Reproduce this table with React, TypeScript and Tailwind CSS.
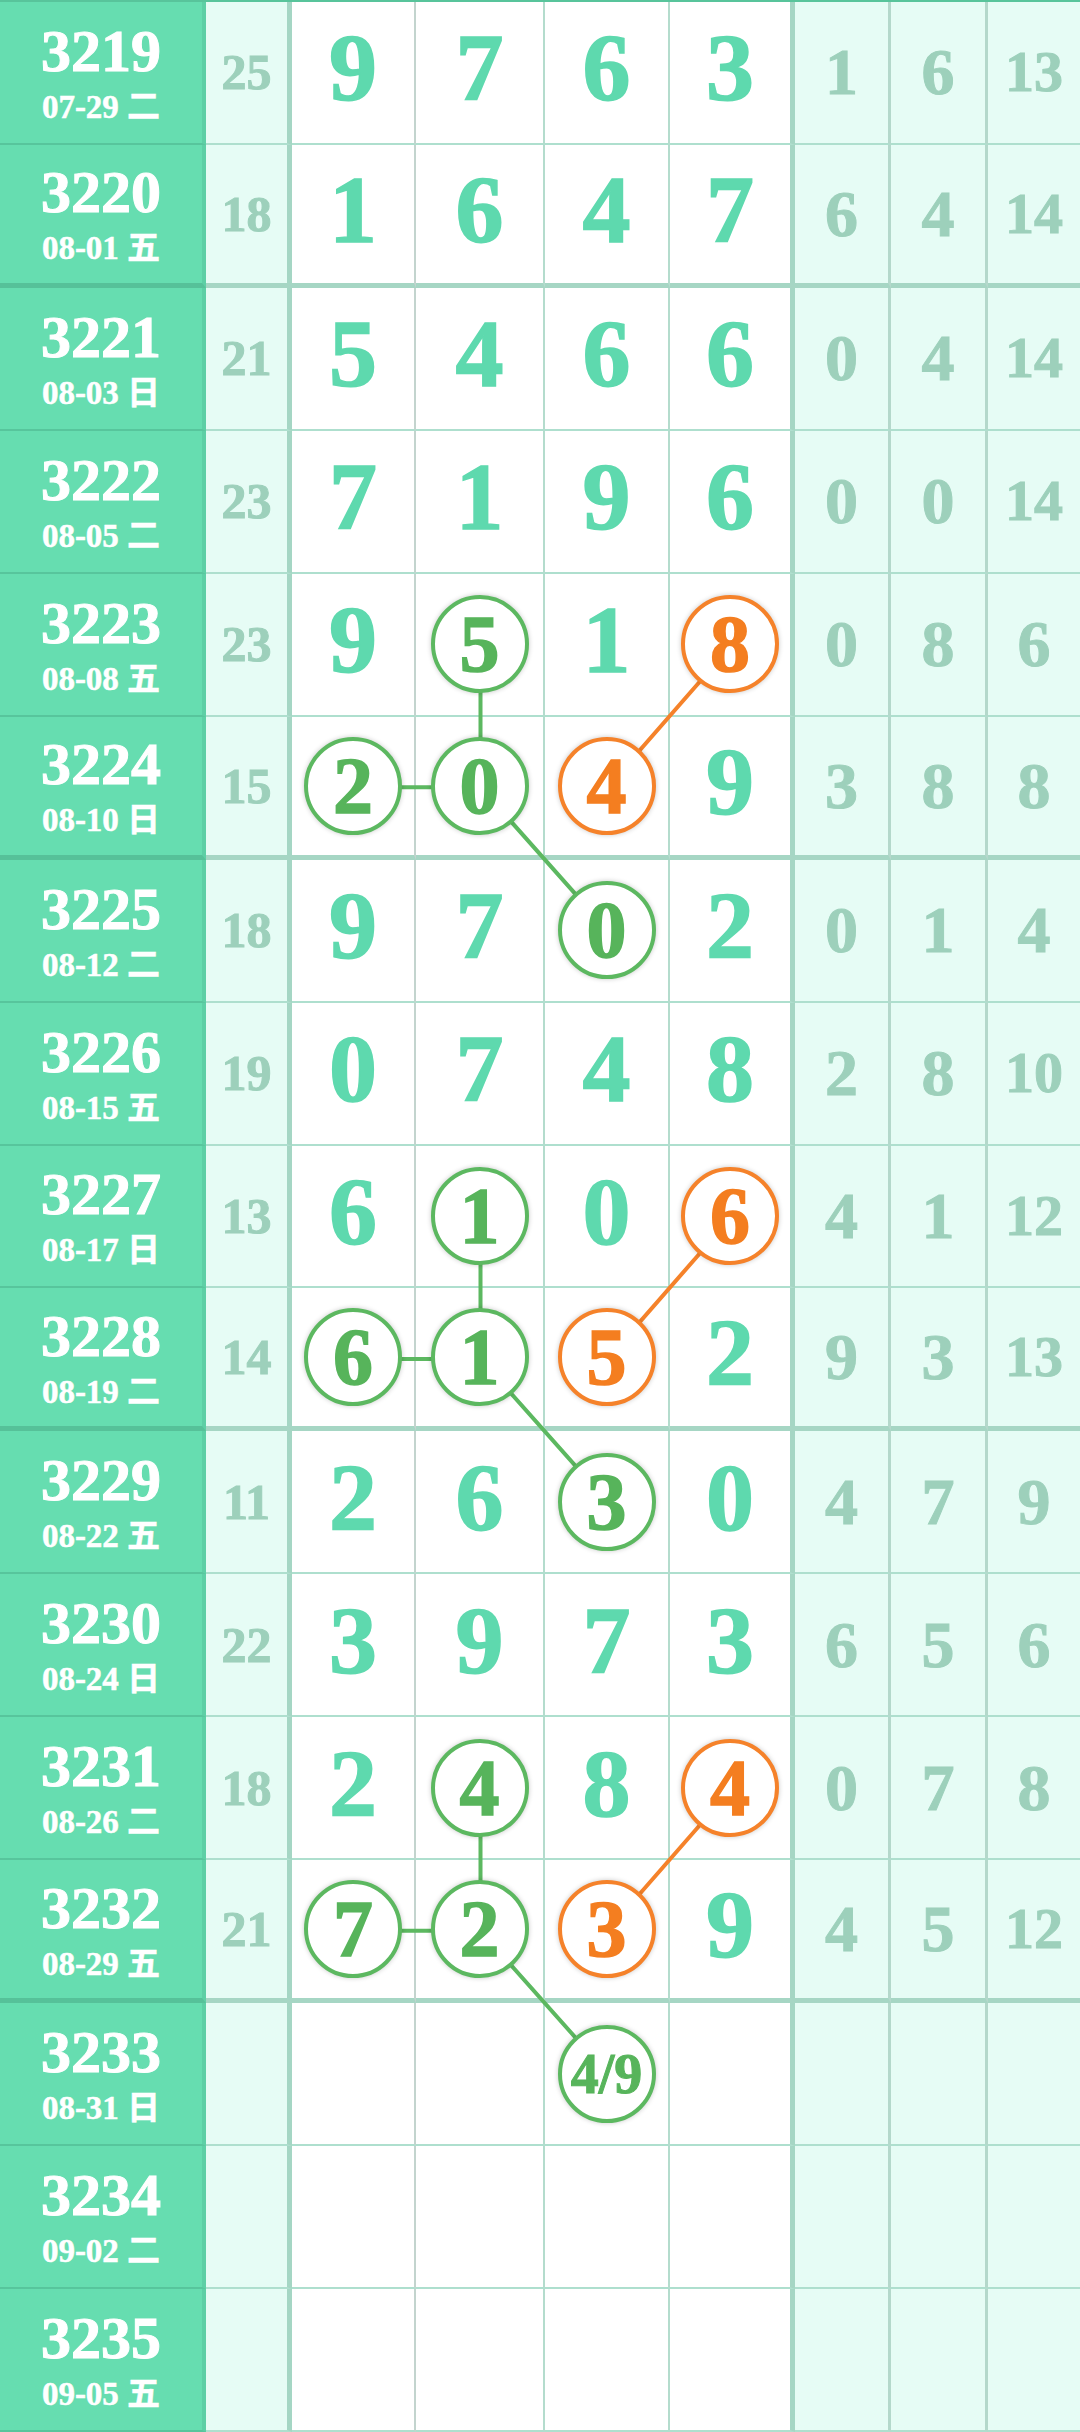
import React from "react";

type Mark = "g" | "o" | "";

interface DrawRow {
  no: string;
  date: string;
  sum: string;
  digits: string[];
  marks: Mark[];
  extra: string[];
}

const rows: DrawRow[] = [
  { no: "3219", date: "07-29 二", sum: "25", digits: ["9", "7", "6", "3"], marks: ["", "", "", ""], extra: ["1", "6", "13"] },
  { no: "3220", date: "08-01 五", sum: "18", digits: ["1", "6", "4", "7"], marks: ["", "", "", ""], extra: ["6", "4", "14"] },
  { no: "3221", date: "08-03 日", sum: "21", digits: ["5", "4", "6", "6"], marks: ["", "", "", ""], extra: ["0", "4", "14"] },
  { no: "3222", date: "08-05 二", sum: "23", digits: ["7", "1", "9", "6"], marks: ["", "", "", ""], extra: ["0", "0", "14"] },
  { no: "3223", date: "08-08 五", sum: "23", digits: ["9", "5", "1", "8"], marks: ["", "g", "", "o"], extra: ["0", "8", "6"] },
  { no: "3224", date: "08-10 日", sum: "15", digits: ["2", "0", "4", "9"], marks: ["g", "g", "o", ""], extra: ["3", "8", "8"] },
  { no: "3225", date: "08-12 二", sum: "18", digits: ["9", "7", "0", "2"], marks: ["", "", "g", ""], extra: ["0", "1", "4"] },
  { no: "3226", date: "08-15 五", sum: "19", digits: ["0", "7", "4", "8"], marks: ["", "", "", ""], extra: ["2", "8", "10"] },
  { no: "3227", date: "08-17 日", sum: "13", digits: ["6", "1", "0", "6"], marks: ["", "g", "", "o"], extra: ["4", "1", "12"] },
  { no: "3228", date: "08-19 二", sum: "14", digits: ["6", "1", "5", "2"], marks: ["g", "g", "o", ""], extra: ["9", "3", "13"] },
  { no: "3229", date: "08-22 五", sum: "11", digits: ["2", "6", "3", "0"], marks: ["", "", "g", ""], extra: ["4", "7", "9"] },
  { no: "3230", date: "08-24 日", sum: "22", digits: ["3", "9", "7", "3"], marks: ["", "", "", ""], extra: ["6", "5", "6"] },
  { no: "3231", date: "08-26 二", sum: "18", digits: ["2", "4", "8", "4"], marks: ["", "g", "", "o"], extra: ["0", "7", "8"] },
  { no: "3232", date: "08-29 五", sum: "21", digits: ["7", "2", "3", "9"], marks: ["g", "g", "o", ""], extra: ["4", "5", "12"] },
  { no: "3233", date: "08-31 日", sum: "", digits: ["", "", "4/9", ""], marks: ["", "", "g", ""], extra: ["", "", ""] },
  { no: "3234", date: "09-02 二", sum: "", digits: ["", "", "", ""], marks: ["", "", "", ""], extra: ["", "", ""] },
  { no: "3235", date: "09-05 五", sum: "", digits: ["", "", "", ""], marks: ["", "", "", ""], extra: ["", "", ""] },
];

// rows after which a heavier rule is drawn
const thickAfter = [1, 5, 9, 13];

const ROW_H = 2430 / 17;
const colX = [354, 480.5, 607.5, 732.5];
const cy = (r: number) => 2 + ROW_H * r + ROW_H / 2 - 1;

const serif = "font-['Liberation_Serif','Noto_Sans_CJK_SC',serif] font-bold leading-none";

function Circle({ value, mark }: { value: string; mark: Mark }) {
  const tone =
    mark === "g"
      ? "border-[#5cb860] text-[#57b45b]"
      : "border-[#f5822a] text-[#f47e20]";
  return (
    <div
      className={`relative z-20 flex h-[98px] w-[98px] items-center justify-center rounded-full border-4 bg-white shadow-[0_0_5px_rgba(0,0,0,0.22)] ${tone}`}
    >
      <span
        className={
          value.length > 1
            ? "text-[56px] [-webkit-text-stroke:1px_currentColor]"
            : "text-[80px] [-webkit-text-stroke:1.5px_currentColor]"
        }
      >
        {value}
      </span>
    </div>
  );
}

const App = () => {
  const groups = [4, 8, 12];

  return (
    <div className={`relative w-[1080px] h-[2432px] overflow-hidden bg-white ${serif}`}>
      <div className="grid h-full grid-cols-[206px_86px_124px_129px_125px_125px_96px_97px_92px] grid-rows-[repeat(17,1fr)] border-t-2 border-[#58c49b]">
        {rows.map((row, r) => {
          const thick = thickAfter.includes(r);
          const bLabel = thick ? "border-b-[5px] border-b-[#56c199]" : "border-b-2 border-b-[#57c59c]";
          const bBody = thick ? "border-b-[5px] border-b-[#a6d6c4]" : "border-b-2 border-b-[#aedfce]";
          return (
            <React.Fragment key={row.no}>
              {/* period + date */}
              <div
                className={`flex flex-col items-center justify-center gap-2.5 bg-[#66ddb0] text-white border-r-4 border-r-[#5dcfa5] ${bLabel}`}
              >
                <span className="text-[60px] [-webkit-text-stroke:1px_currentColor]">{row.no}</span>
                <span className="text-[33px] [-webkit-text-stroke:0.5px_currentColor]">{row.date}</span>
              </div>

              {/* sum */}
              <div
                className={`flex items-center justify-center bg-[#e6fcf5] text-[#9dd0bb] border-r-[5px] border-r-[#a5d6c4] ${bBody}`}
              >
                <span className="text-[50px] [-webkit-text-stroke:1px_currentColor]">{row.sum}</span>
              </div>

              {/* main digits */}
              {row.digits.map((d, i) => (
                <div
                  key={i}
                  className={`flex items-center justify-center bg-white ${
                    i === 3
                      ? "border-r-[5px] border-r-[#a5d6c4]"
                      : i === 0
                      ? "border-r-2 border-r-[#c3d4ce]"
                      : "border-r-2 border-r-[#b4dccd]"
                  } ${bBody}`}
                >
                  {d && row.marks[i] ? (
                    <Circle value={d} mark={row.marks[i]} />
                  ) : (
                    <span className="pb-2 text-[96px] text-[#5ed9ae] [-webkit-text-stroke:1.5px_currentColor]">{d}</span>
                  )}
                </div>
              ))}

              {/* trailing stats */}
              {row.extra.map((e, i) => (
                <div
                  key={i}
                  className={`flex items-center justify-center bg-[#e6fcf5] text-[#9dd0bb] ${
                    i < 2 ? "border-r-[3px] border-r-[#b4d8cb]" : ""
                  } ${bBody}`}
                >
                  <span
                    className={
                      e.length > 1
                        ? "text-[58px] [-webkit-text-stroke:1px_currentColor]"
                        : "text-[66px] [-webkit-text-stroke:1px_currentColor]"
                    }
                  >
                    {e}
                  </span>
                </div>
              ))}
            </React.Fragment>
          );
        })}
      </div>

      {/* connector lines between the marked numbers */}
      <svg
        className="pointer-events-none absolute inset-0 z-10"
        width={1080}
        height={2432}
        viewBox="0 0 1080 2432"
      >
        {groups.map((b) => (
          <g key={b} strokeWidth={4} strokeLinecap="round">
            <line x1={colX[1]} y1={cy(b)} x2={colX[1]} y2={cy(b + 1)} stroke="#5cb860" />
            <line x1={colX[0]} y1={cy(b + 1)} x2={colX[1]} y2={cy(b + 1)} stroke="#5cb860" />
            <line x1={colX[1]} y1={cy(b + 1)} x2={colX[2]} y2={cy(b + 2)} stroke="#5cb860" />
            <line x1={colX[3]} y1={cy(b)} x2={colX[2]} y2={cy(b + 1)} stroke="#f5822a" />
          </g>
        ))}
      </svg>
    </div>
  );
};

export default App;
